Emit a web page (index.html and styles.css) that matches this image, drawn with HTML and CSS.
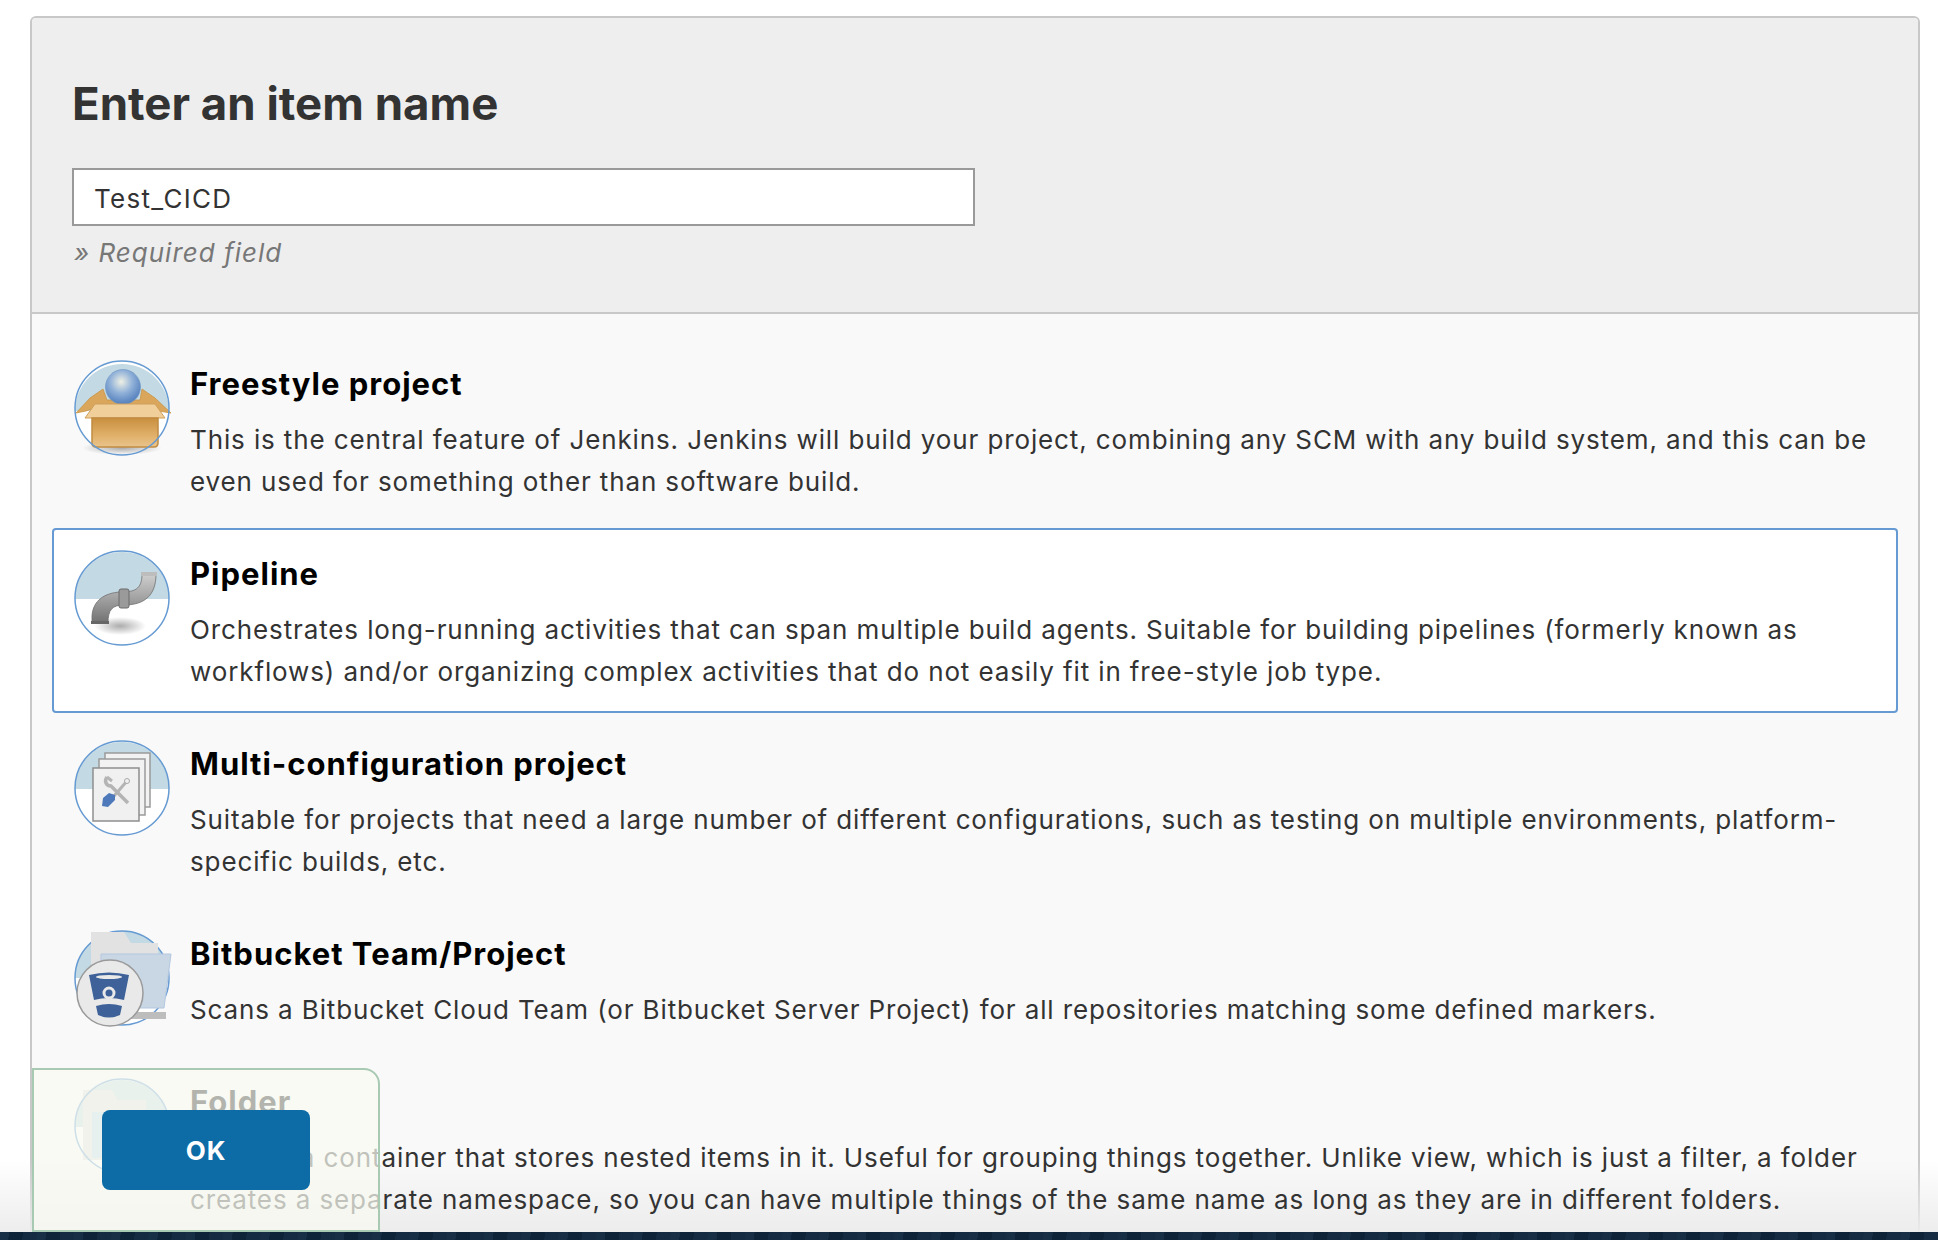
FILE: index.html
```html
<!DOCTYPE html>
<html lang="en">
<head>
<meta charset="utf-8">
<title>New Item</title>
<link rel="stylesheet" href="styles.css">
</head>
<body>
<div class="page">
  <form class="panel">
    <header class="panel-head">
      <h1 class="head-title">Enter an item name</h1>
      <div class="name-input">Test_CICD</div>
      <div class="required">» Required field</div>
    </header>
    <ul class="items">
      <li class="item">
        <svg class="icon" viewBox="0 0 96 96">
          <defs>
            <radialGradient id="ball" cx="45%" cy="35%" r="60%"><stop offset="0" stop-color="#eef0e4"/><stop offset=".55" stop-color="#8fb0d8"/><stop offset="1" stop-color="#5b86c0"/></radialGradient>
            <linearGradient id="box" x1="0" y1="0" x2="0" y2="1"><stop offset="0" stop-color="#c98f3e"/><stop offset=".6" stop-color="#e0b06a"/><stop offset="1" stop-color="#eac48c"/></linearGradient>
            <radialGradient id="shade"><stop offset="0" stop-color="#888" stop-opacity=".7"/><stop offset="1" stop-color="#888" stop-opacity="0"/></radialGradient>
          </defs>
          <circle cx="48" cy="48" r="47" fill="#fff"/>
          <path d="M1 51A47 47 0 0 1 95 51Z" fill="#c3d9e3"/>
          <ellipse cx="48" cy="88" rx="40" ry="7" fill="url(#shade)"/>
          <path d="M2 53 L16 38 L29 29 L33 40 L66 40 L68 29 L81 38 L97 53 L84 51 L70 46 H26 L12 51Z" fill="#d9a65c" stroke="#c99545" stroke-width=".8"/>
          <circle cx="49" cy="27" r="17.500" fill="url(#ball)" stroke="#6f95c5" stroke-width=".6"/>
          <path d="M21 44 H81 L91 58 H11Z" fill="#f1cf9b" stroke="#cf9f5a"/>
          <path d="M18 58 H84 V83 Q84 87 80 87 H22 Q18 87 18 83Z" fill="url(#box)" stroke="#c08c42" stroke-width="1.500"/>
          <circle cx="48" cy="48" r="47" fill="none" stroke="#659ad2" stroke-width="1.500"/>
        </svg>
        <div class="item-text">
          <div class="item-title">Freestyle project</div>
          <div class="item-desc">This is the central feature of Jenkins. Jenkins will build your project, combining any SCM with any build system, and this can be even used for something other than software build.</div>
        </div>
      </li>
      <li class="item is-selected">
        <svg class="icon" viewBox="0 0 96 96">
          <defs>
            <linearGradient id="pipe" x1="0" y1="0" x2="0" y2="1"><stop offset="0" stop-color="#cfcfcf"/><stop offset=".45" stop-color="#a6a6a6"/><stop offset="1" stop-color="#717171"/></linearGradient>
          </defs>
          <circle cx="48" cy="48" r="47" fill="#fff"/>
          <path d="M1 49A47 47 0 0 1 95 49Z" fill="#c3d9e3"/>
          <ellipse cx="46" cy="76" rx="26" ry="9" fill="url(#shade)"/>
          <path d="M18 73 V66 C19 50 31 43 46 42 C60 42 68 40 68 24 H82 C82 46 70 55 50 55 C38 55 34 60 34 73Z" fill="url(#pipe)" stroke="#707070" stroke-width=".8"/>
          <rect x="45" y="39" width="10" height="19" rx="2" fill="#9a9a9a" stroke="#6a6a6a"/>
          <rect x="67" y="22" width="16" height="4" fill="#bdbdbd"/>
          <rect x="17" y="71" width="18" height="3" fill="#666"/>
          <circle cx="48" cy="48" r="47" fill="none" stroke="#659ad2" stroke-width="1.500"/>
        </svg>
        <div class="item-text">
          <div class="item-title">Pipeline</div>
          <div class="item-desc">Orchestrates long-running activities that can span multiple build agents. Suitable for building pipelines (formerly known as workflows) and/or organizing complex activities that do not easily fit in free-style job type.</div>
        </div>
      </li>
      <li class="item">
        <svg class="icon" viewBox="0 0 96 96">
          <circle cx="48" cy="48" r="47" fill="#fff"/>
          <path d="M1 49A47 47 0 0 1 95 49Z" fill="#c3d9e3"/>
          <rect x="31" y="13" width="45" height="54" fill="#f2f2f2" stroke="#9a9a9a" stroke-width="1.500"/>
          <rect x="25" y="19" width="46" height="56" fill="#f2f2f2" stroke="#9a9a9a" stroke-width="1.500"/>
          <rect x="19" y="28" width="46" height="53" fill="#f0f0f0" stroke="#8e8e8e" stroke-width="1.500"/>
          <path d="M33 37 C30 41 32 46 37 46 L54 63" fill="none" stroke="#b4b4b4" stroke-width="3.500"/>
          <path d="M33 37 L38 41 M53 41 L40 56" fill="none" stroke="#b4b4b4" stroke-width="3"/>
          <circle cx="53" cy="41" r="2.500" fill="#f0f0f0" stroke="#a8a8a8"/>
          <path d="M29 58 L35 53 L41 55 L41 60 L34 67 L28 66Z" fill="#4d79bb"/>
          <circle cx="48" cy="48" r="47" fill="none" stroke="#659ad2" stroke-width="1.500"/>
        </svg>
        <div class="item-text">
          <div class="item-title">Multi-configuration project</div>
          <div class="item-desc">Suitable for projects that need a large number of different configurations, such as testing on multiple environments, platform-specific builds, etc.</div>
        </div>
      </li>
      <li class="item">
        <svg class="icon" viewBox="0 0 96 96">
          <circle cx="48" cy="48" r="47" fill="#c3d9e3"/>
          <path d="M1 48A47 47 0 0 0 95 48Z" fill="#fff"/>
          <circle cx="48" cy="48" r="47" fill="none" stroke="#659ad2" stroke-width="1.500"/>
          <path d="M17 2 H50 L57 13 H84 V60 H17Z" fill="#e2e2e2"/>
          <path d="M27 24 H97 L90 78 H27Z" fill="#c9d6e4" stroke="#b3c8e0"/>
          <path d="M55 82 H92 V89 H55Z" fill="#bdbdbd"/>
          <circle cx="36" cy="63" r="33" fill="#e9e9e9" stroke="#9a9a9a" stroke-width="1.500"/>
          <path d="M15 45 Q35 40 55 45 L50 70 Q35 66 20 70Z M22 76 Q35 72 48 76 L46 85 Q35 90 24 85Z" fill="#3d6198"/>
          <ellipse cx="35" cy="47" rx="13" ry="2" fill="#e9e9e9"/>
          <circle cx="35" cy="63" r="5" fill="#3d6198" stroke="#e9e9e9" stroke-width="3"/>
        </svg>
        <div class="item-text">
          <div class="item-title">Bitbucket Team/Project</div>
          <div class="item-desc">Scans a Bitbucket Cloud Team (or Bitbucket Server Project) for all repositories matching some defined markers.</div>
        </div>
      </li>
      <li class="item">
        <svg class="icon" viewBox="0 0 96 96">
          <circle cx="48" cy="48" r="47" fill="#fff"/>
          <path d="M1 49A47 47 0 0 1 95 49Z" fill="#c3d9e3"/>
          <path d="M9 12 H38 L44 22 H72 V82 H9Z" fill="#ddd"/>
          <path d="M18 34 H80 V80 H18Z" fill="#bcd6ee"/>
          <circle cx="48" cy="48" r="47" fill="none" stroke="#659ad2" stroke-width="1.500"/>
        </svg>
        <div class="item-text">
          <div class="item-title">Folder</div>
          <div class="item-desc">Creates a container that stores nested items in it. Useful for grouping things together. Unlike view, which is just a filter, a folder creates a separate namespace, so you can have multiple things of the same name as long as they are in different folders.</div>
        </div>
      </li>
    </ul>
  </form>
  <div class="fade"></div>
  <div class="footer-strip"></div>
  <div class="ok-dock"><button class="ok-btn" type="button">OK</button></div>
</div>
</body>
</html>
```
FILE: styles.css
```css
* { box-sizing: border-box; }
html, body { margin: 0; padding: 0; height: 1240px; overflow: hidden; background: #fff; }
body { font-family: Inter, "Liberation Sans", sans-serif; color: #333; }
.page { position: relative; width: 1938px; height: 1240px; overflow: hidden; padding: 16px 18px 0 30px; }
.panel { display: block; height: 1300px; border: 2px solid #c8c8c8; border-radius: 6px; background: #f9f9f9; overflow: hidden; }
.panel-head { height: 296px; padding: 0 40px; background: #eee; border-bottom: 2px solid #c8c8c8; }
.head-title { margin: 0; padding-top: 53px; font-size: 45.6px; line-height: 66px; font-weight: 700; color: #333; }
.name-input { margin-top: 31px; width: 903px; height: 58px; padding: 0 20px; border: 2px solid #999; background: #fff; font-size: 26px; line-height: 57px; letter-spacing: 1.3px; color: #333; }
.required { margin: 9px 0 0 2px; font-size: 26px; line-height: 36px; font-style: italic; letter-spacing: 1px; color: #777; }
.items { position: relative; z-index: 1; list-style: none; margin: 0; padding: 24px 20px 0; display: flex; flex-direction: column; gap: 5px; }
.item { display: flex; gap: 20px; padding: 20px 20px 18px; border: 2px solid transparent; border-radius: 4px; }
.item.is-selected { border-color: #659ad2; background: #fff; }
.icon { flex: none; width: 96px; height: 96px; overflow: visible; }
.item-title { font-size: 31px; line-height: 38px; margin: 5px 0 16px; font-weight: 700; letter-spacing: 1px; color: #000; }
.item-desc { font-size: 26px; line-height: 42px; letter-spacing: .88px; color: #333; }
.fade { position: absolute; z-index: 0; left: 0; right: 0; bottom: 8px; height: 72px; background: linear-gradient(to bottom, rgba(240,240,240,0), rgba(236,236,236,.95)); }
.footer-strip { position: absolute; z-index: 2; left: 0; right: 0; bottom: 0; height: 8px; background:
  repeating-linear-gradient(97deg, rgba(50,75,100,.18) 0 9px, rgba(5,15,30,.2) 9px 23px, rgba(40,60,85,.14) 23px 37px),
  #11283e; }
.ok-dock { position: absolute; z-index: 2; left: 32px; top: 1068px; width: 348px; height: 164px; padding: 40px 0 0 68px; border: 2px solid #a8c9b2; border-radius: 0 16px 0 0; background: rgba(246,249,240,.72); }
.ok-btn { display: block; width: 208px; height: 80px; border: 0; border-radius: 8px; background: #0d6ca6; color: #fff; font: 700 26px Inter, "Liberation Sans", sans-serif; letter-spacing: 1px; }
```
